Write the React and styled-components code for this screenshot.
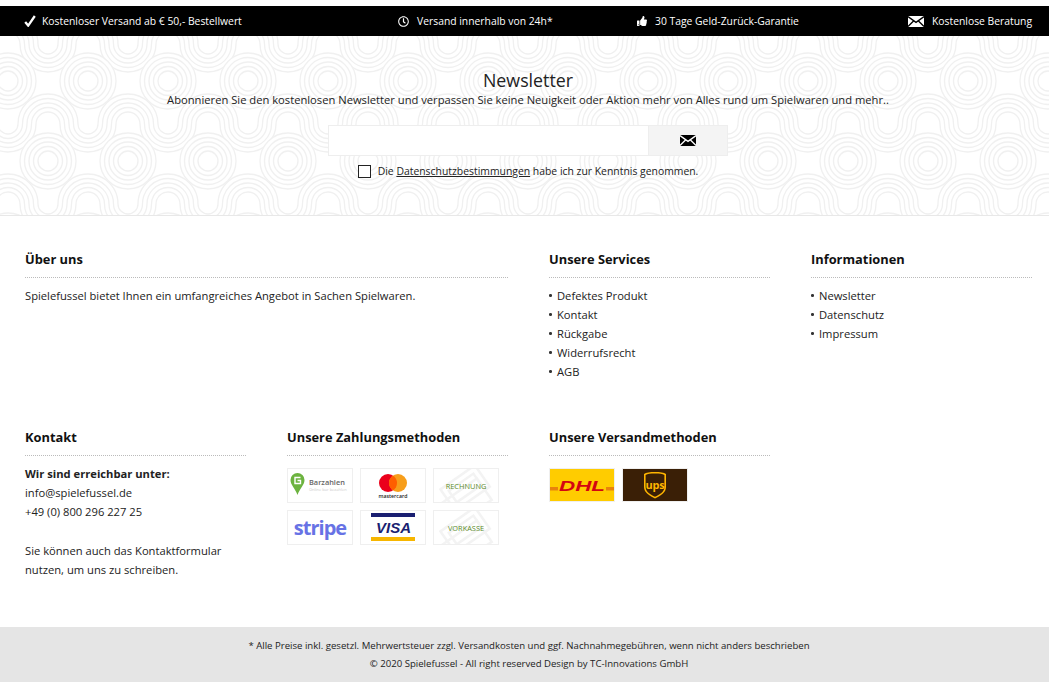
import React from 'react';
import styled, { createGlobalStyle } from 'styled-components';
import { FaRegClock, FaThumbsUp } from 'react-icons/fa';

// concentric wave tile used behind the newsletter block
const wave = (y, x0) => {
  const sizes = [12, 16.5, 21, 25.5, 30];
  return sizes
    .map(a => {
      const b = 40 - a;
      return `M${x0 - 80 - a} ${y}A${a} ${a} 0 0 1 ${x0 - 80 + a} ${y}A${b} ${b} 0 0 0 ${x0 - a} ${y}A${a} ${a} 0 0 1 ${x0 + a} ${y}A${b} ${b} 0 0 0 ${x0 + 80 - a} ${y}A${a} ${a} 0 0 1 ${x0 + 80 + a} ${y}`;
    })
    .join('');
};
// rings are filled white so they sit on top of the waves
const rings = (x, y) =>
  [28, 23.5, 19, 14.5, 10]
    .map(r => `<circle cx='${x}' cy='${y}' r='${r}'/>`)
    .join('');
const tile = `<svg xmlns='http://www.w3.org/2000/svg' width='80' height='160'><g fill='none' stroke='#f0f0f0' stroke-width='1.3'><path d='${wave(8, 8)}'/><path d='${wave(88, 48)}'/><path d='${wave(168, 8)}'/></g><g fill='#fff' stroke='#f0f0f0' stroke-width='1.3'>${rings(8, 45)}${rings(88, 45)}${rings(48, 125)}</g></svg>`;
const tileUrl = `url("data:image/svg+xml,${encodeURIComponent(tile)}")`;

const GlobalStyle = createGlobalStyle`
  html, body {
    margin: 0;
    padding: 0;
    background: #fff;
  }
  body {
    font-family: "Open Sans", "DejaVu Sans", sans-serif;
    color: #222;
    overflow: hidden;
  }
`;

const Page = styled.div`
  width: 1049px;
  height: 682px;
  padding-top: 6px;
  box-sizing: border-box;
  display: flex;
  flex-direction: column;
`;

const TopBar = styled.div`
  height: 30px;
  background: #000;
  color: #fff;
  display: grid;
  grid-template-columns: 374px 239px 271px 1fr;
  padding: 0 17px 0 24px;
  font-size: 10.35px;
  align-items: center;
`;

const TopItem = styled.div`
  display: flex;
  align-items: center;
  gap: ${p => p.$gap || 8}px;
  white-space: nowrap;
`;

const NewsletterBlock = styled.section`
  height: 180px;
  box-sizing: border-box;
  border-bottom: 1px solid #e8e8e8;
  background-color: #fff;
  background-image: ${tileUrl};
  padding: 32px 18px 0 25px;
  display: flex;
  flex-direction: column;
  align-items: center;
`;

const NewsTitle = styled.h2`
  margin: 0;
  font-size: 17.8px;
  line-height: 24px;
  font-weight: 400;
  color: #222;
`;

const NewsText = styled.p`
  margin: 0;
  font-size: 11.2px;
  line-height: 15px;
  white-space: nowrap;
`;

const NewsForm = styled.div`
  margin-top: 18px;
  width: 400px;
  height: 31px;
  display: flex;
`;

const NewsInput = styled.div`
  flex: 1;
  background: #fff;
  border: 1px solid #eee;
  border-right: 0;
`;

const NewsButton = styled.div`
  width: 80px;
  background: #f4f4f4;
  border: 1px solid #eee;
  box-sizing: border-box;
  display: flex;
  align-items: center;
  justify-content: center;
`;

const Consent = styled.label`
  margin-top: 8px;
  display: flex;
  align-items: center;
  gap: 7px;
  font-size: 10.4px;
  line-height: 14px;
  white-space: nowrap;
`;

const CheckBox = styled.span`
  width: 13px;
  height: 13px;
  box-sizing: border-box;
  border: 1px solid #222;
  background: #fff;
`;

const PolicyLink = styled.a`
  color: #222;
  text-decoration: underline;
`;

const Columns = styled.main`
  flex: 1;
  padding: 34px 17px 0 25px;
  display: grid;
  grid-template-columns: repeat(4, 221px);
  grid-template-rows: 178px auto;
  column-gap: 41px;
`;

const Column = styled.div`
  grid-column: span ${p => p.$span || 1};
`;

const Heading = styled.h3`
  margin: 0 0 8px;
  padding-bottom: 9px;
  border-bottom: 1px dotted #bbb;
  font-size: 12.85px;
  line-height: 18px;
  font-weight: 700;
  color: #111;
`;

const BodyText = styled.p`
  margin: 0;
  font-size: 11.2px;
  line-height: 19.2px;
`;

const Links = styled.ul`
  margin: 0;
  padding: 0;
  list-style: none;
`;

const LinkItem = styled.li`
  font-size: 11.2px;
  line-height: 19px;
  padding-left: 8px;
  position: relative;
  &::before {
    content: '';
    position: absolute;
    left: 0;
    top: 8px;
    width: 2.5px;
    height: 2.5px;
    border-radius: 50%;
    background: #333;
  }
`;

const Spacer = styled.div`
  height: 19px;
`;

const LogoGrid = styled.div`
  margin-top: 12px;
  display: grid;
  grid-template-columns: repeat(3, 66px);
  grid-auto-rows: 35px;
  gap: 7px 7px;
`;

const ShipRow = styled.div`
  margin-top: 12px;
  display: flex;
  gap: 7px;
`;

const LogoCard = styled.div`
  width: 66px;
  height: ${p => p.$h || 35}px;
  box-sizing: border-box;
  border: 1px solid #efefef;
  background: #fff;
  overflow: hidden;
  & > svg {
    display: block;
    width: 100%;
    height: 100%;
  }
`;

const BottomBar = styled.footer`
  height: 55px;
  background: #e5e5e5;
  padding: 10px 0 0 9px;
  box-sizing: border-box;
  text-align: center;
  font-size: 9.6px;
  line-height: 18px;
  color: #222;
`;

const Check = () => (
  <svg width="12" height="12" viewBox="0 0 12 12">
    <path d="M1.2 7 L4.2 10.6 L10.8 1" fill="none" stroke="#fff" strokeWidth="2.3" />
  </svg>
);

const Envelope = ({ fg, line }) => (
  <svg width="16" height="11" viewBox="0 0 16 11">
    <rect width="16" height="11" fill={fg} />
    <path d="M0 0.6 L8 6.4 L16 0.6 M0 10.5 L5.8 4.8 M16 10.5 L10.2 4.8" stroke={line} strokeWidth="1.3" fill="none" />
  </svg>
);

const Watermark = ({ label }) => (
  <svg viewBox="0 0 64 33">
    <g fill="none" stroke="#f3f3f3" strokeWidth="2.5" transform="rotate(-35 32 22)">
      <rect x="12" y="6" width="42" height="26" />
      <rect x="18" y="12" width="30" height="14" />
      <rect x="6" y="18" width="42" height="26" />
    </g>
    <text x="32" y="19.5" textAnchor="middle" fontFamily="Open Sans" fontSize="7.4" fill="#5b8c2a">
      {label}
    </text>
  </svg>
);

const Barzahlen = () => (
  <svg viewBox="0 0 64 33">
    <path d="M2.5 11 a7 7 0 0 1 14 0 c0 5 -4.5 8 -7 15 c-2.5 -7 -7 -10 -7 -15z" fill="#6cb33f" />
    <path d="M12.5 8.5 H7 V14.5 H12.5 V11.5 H9.5" fill="none" stroke="#fff" strokeWidth="1.4" />
    <text x="21" y="15.5" fontFamily="Open Sans" fontWeight="600" fontSize="7.4" fill="#666">Barzahlen</text>
    <text x="21" y="21.5" fontFamily="Open Sans" fontSize="4" fill="#ccc">Online bar bezahlen</text>
  </svg>
);

const Mastercard = () => (
  <svg viewBox="0 0 64 33">
    <circle cx="27" cy="14" r="9" fill="#eb001b" />
    <circle cx="37" cy="14" r="9" fill="#f79e1b" />
    <path d="M32 6.5 a9 9 0 0 1 0 15 a9 9 0 0 1 0 -15z" fill="#ff5f00" />
    <text x="32" y="28.5" textAnchor="middle" fontFamily="Open Sans" fontWeight="600" fontSize="5.2" fill="#222">mastercard</text>
  </svg>
);

const Stripe = () => (
  <svg viewBox="0 0 64 33">
    <text x="32" y="23.5" textAnchor="middle" fontFamily="Open Sans" fontWeight="700" fontSize="20" letterSpacing="-1" fill="#6772e5">stripe</text>
  </svg>
);

const Visa = () => (
  <svg viewBox="0 0 64 33">
    <rect x="10" y="2" width="44" height="4" fill="#1a1f71" />
    <rect x="10" y="26" width="44" height="4" fill="#f7b600" />
    <text x="32.5" y="22" textAnchor="middle" fontFamily="Liberation Sans" fontStyle="italic" fontWeight="700" fontSize="15" fill="#1a1f71">VISA</text>
  </svg>
);

const Dhl = () => (
  <svg viewBox="0 0 64 32" preserveAspectRatio="none">
    <rect width="64" height="32" fill="#fc0" />
    <path d="M0 18 H64 V21.5 H0z" fill="#e8830c" />
    <rect x="8" y="11.5" width="48" height="11" fill="#fc0" />
    <text x="9" y="22" textLength="46" lengthAdjust="spacingAndGlyphs" fontFamily="Liberation Sans" fontStyle="italic" fontWeight="700" fontSize="14" fill="#d40511">DHL</text>
  </svg>
);

const Ups = () => (
  <svg viewBox="0 0 64 32" preserveAspectRatio="none">
    <rect width="64" height="32" fill="#3a1f06" />
    <path d="M32 3 C37 3 41 3.5 43 5 V18 C43 24 37 27 32 29.5 C27 27 21 24 21 18 V5 C23 3.5 27 3 32 3z" fill="#ffb500" />
    <path d="M32 4.6 C36.5 4.6 39.5 5 41.4 6 V18 C41.4 23 36.5 25.7 32 27.8 C27.5 25.7 22.6 23 22.6 18 V6 C24.5 5 27.5 4.6 32 4.6z" fill="#3a1f06" />
    <text x="32" y="20" textAnchor="middle" fontFamily="Open Sans" fontWeight="700" fontSize="11" letterSpacing="-0.3" fill="#ffb500">ups</text>
  </svg>
);

const App = () => (
  <>
    <GlobalStyle />
    <Page>
      <TopBar>
        <TopItem $gap={6}><Check />Kostenloser Versand ab € 50,- Bestellwert</TopItem>
        <TopItem $gap={8}><FaRegClock size={11} />Versand innerhalb von 24h*</TopItem>
        <TopItem $gap={8}><FaThumbsUp size={10} />30 Tage Geld-Zurück-Garantie</TopItem>
        <TopItem $gap={8}><Envelope fg="#fff" line="#000" />Kostenlose Beratung</TopItem>
      </TopBar>

      <NewsletterBlock>
        <NewsTitle>Newsletter</NewsTitle>
        <NewsText>
          Abonnieren Sie den kostenlosen Newsletter und verpassen Sie keine Neuigkeit oder Aktion mehr von Alles rund um Spielwaren und mehr..
        </NewsText>
        <NewsForm>
          <NewsInput />
          <NewsButton><Envelope fg="#000" line="#fff" /></NewsButton>
        </NewsForm>
        <Consent>
          <CheckBox />
          <span>Die <PolicyLink>Datenschutzbestimmungen</PolicyLink> habe ich zur Kenntnis genommen.</span>
        </Consent>
      </NewsletterBlock>

      <Columns>
        <Column $span={2}>
          <Heading>Über uns</Heading>
          <BodyText>Spielefussel bietet Ihnen ein umfangreiches Angebot in Sachen Spielwaren.</BodyText>
        </Column>
        <Column>
          <Heading>Unsere Services</Heading>
          <Links>
            {['Defektes Produkt', 'Kontakt', 'Rückgabe', 'Widerrufsrecht', 'AGB'].map(label => (
              <LinkItem key={label}>{label}</LinkItem>
            ))}
          </Links>
        </Column>
        <Column>
          <Heading>Informationen</Heading>
          <Links>
            {['Newsletter', 'Datenschutz', 'Impressum'].map(label => (
              <LinkItem key={label}>{label}</LinkItem>
            ))}
          </Links>
        </Column>

        <Column>
          <Heading>Kontakt</Heading>
          <BodyText><strong>Wir sind erreichbar unter:</strong></BodyText>
          <BodyText>info@spielefussel.de</BodyText>
          <BodyText>+49 (0) 800 296 227 25</BodyText>
          <Spacer />
          <BodyText>Sie können auch das Kontaktformular nutzen, um uns zu schreiben.</BodyText>
        </Column>
        <Column>
          <Heading>Unsere Zahlungsmethoden</Heading>
          <LogoGrid>
            <LogoCard><Barzahlen /></LogoCard>
            <LogoCard><Mastercard /></LogoCard>
            <LogoCard><Watermark label="RECHNUNG" /></LogoCard>
            <LogoCard><Stripe /></LogoCard>
            <LogoCard><Visa /></LogoCard>
            <LogoCard><Watermark label="VORKASSE" /></LogoCard>
          </LogoGrid>
        </Column>
        <Column>
          <Heading>Unsere Versandmethoden</Heading>
          <ShipRow>
            <LogoCard $h={34}><Dhl /></LogoCard>
            <LogoCard $h={34}><Ups /></LogoCard>
          </ShipRow>
        </Column>
      </Columns>

      <BottomBar>
        <div>* Alle Preise inkl. gesetzl. Mehrwertsteuer zzgl. Versandkosten und ggf. Nachnahmegebühren, wenn nicht anders beschrieben</div>
        <div>© 2020 Spielefussel - All right reserved Design by TC-Innovations GmbH</div>
      </BottomBar>
    </Page>
  </>
);

export default App;
